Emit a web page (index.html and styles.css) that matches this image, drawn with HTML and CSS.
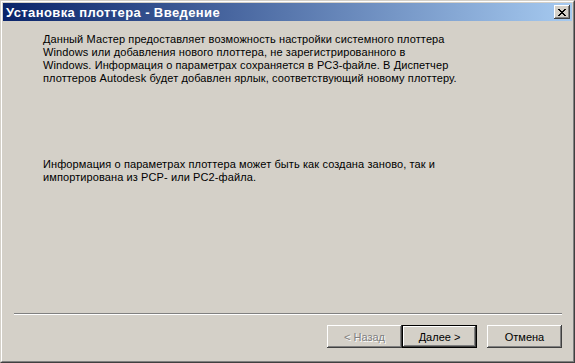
FILE: index.html
```html
<!DOCTYPE html>
<html lang="ru">
  <head>
    <meta charset="UTF-8" />
    <title>Установка плоттера - Введение</title>
    <link rel="stylesheet" href="styles.css">
  </head>

  <body>
    <div class="window">
      <div class="frame">
        <!-- заголовок окна -->
        <div class="titlebar">
          <span class="title">Установка плоттера - Введение</span>
          <span class="close">
            <svg width="8" height="7" viewBox="0 0 8 7">
              <path d="M0 0h2v1h1v1h2v-1h1v-1h2v1h-1v1h-1v1h-1v1h1v1h1v1h1v1h-2v-1h-1v-1h-2v1h-1v1h-2v-1h1v-1h1v-1h1v-1h-1v-1h-1v-1h-1z" fill="#000"/>
            </svg>
          </span>
        </div>

        <!-- текст мастера -->
        <div class="content">
          <p class="text">Данный Мастер предоставляет возможность настройки системного плоттера<br>Windows или добавления нового плоттера, не зарегистрированного в<br>Windows. Информация о параметрах сохраняется в PC3-файле. В Диспетчер<br>плоттеров Autodesk будет добавлен ярлык, соответствующий новому плоттеру.</p>
          <p class="text second">Информация о параметрах плоттера может быть как создана заново, так и<br>импортирована из PCP- или PC2-файла.</p>
        </div>

        <div class="separator"></div>

        <!-- кнопки -->
        <div class="buttons">
          <button class="btn" disabled>&lt; Назад</button>
          <button class="btn default">Далее &gt;</button>
          <button class="btn cancel">Отмена</button>
        </div>
      </div>
    </div>
  </body>
</html>
```

FILE: styles.css
```css
* {
  margin: 0;
  padding: 0;
  box-sizing: border-box;
}

body {
  font-family: "Liberation Sans", Arial, sans-serif;
  font-size: 11px;
  color: #000;
  background: #d4d0c8;
}

/* окно */
.window {
  width: 575px;
  height: 363px;
  display: flex;
  flex-direction: column;
  background: #d4d0c8;
  border: 1px solid;
  border-color: #d4d0c8 #404040 #404040 #d4d0c8;
}

.frame {
  flex: 1;
  display: flex;
  flex-direction: column;
  padding: 1px;
  border: 1px solid;
  border-color: #fff #808080 #808080 #fff;
}

/* заголовок */
.titlebar {
  height: 18px;
  display: flex;
  align-items: center;
  justify-content: space-between;
  padding: 0 2px 0 3px;
  background: linear-gradient(to right, #0a246a, #a6caf0);
}

.title {
  color: #fff;
  font-weight: bold;
  font-size: 13px;
  letter-spacing: 0.4px;
}

.close {
  width: 16px;
  height: 14px;
  display: flex;
  align-items: center;
  justify-content: center;
  background: #d4d0c8;
  box-shadow: inset -1px -1px #404040, inset 1px 1px #fff, inset -2px -2px #808080;
}

/* текст */
.content {
  flex: 1;
  padding: 12px 0 0 40px;
}

.text {
  line-height: 13px;
  letter-spacing: 0.1px;
  white-space: nowrap;
}

.text.second {
  margin-top: 73px;
}

.separator {
  margin: 0 10px 0 11px;
  height: 2px;
  border-top: 1px solid #808080;
  border-bottom: 1px solid #fff;
}

/* кнопки */
.buttons {
  display: flex;
  justify-content: flex-end;
  padding: 10px 10px 12px 0;
}

.btn {
  width: 75px;
  height: 23px;
  font-family: "Liberation Sans", Arial, sans-serif;
  font-size: 11px;
  color: #000;
  background: #d4d0c8;
  border: none;
  box-shadow: inset -1px -1px #404040, inset 1px 1px #fff, inset -2px -2px #808080;
}

.btn:disabled {
  color: #808080;
  text-shadow: 1px 1px #fff;
}

.btn.default {
  border: 1px solid #000;
}

.btn.cancel {
  margin-left: 10px;
}
```
